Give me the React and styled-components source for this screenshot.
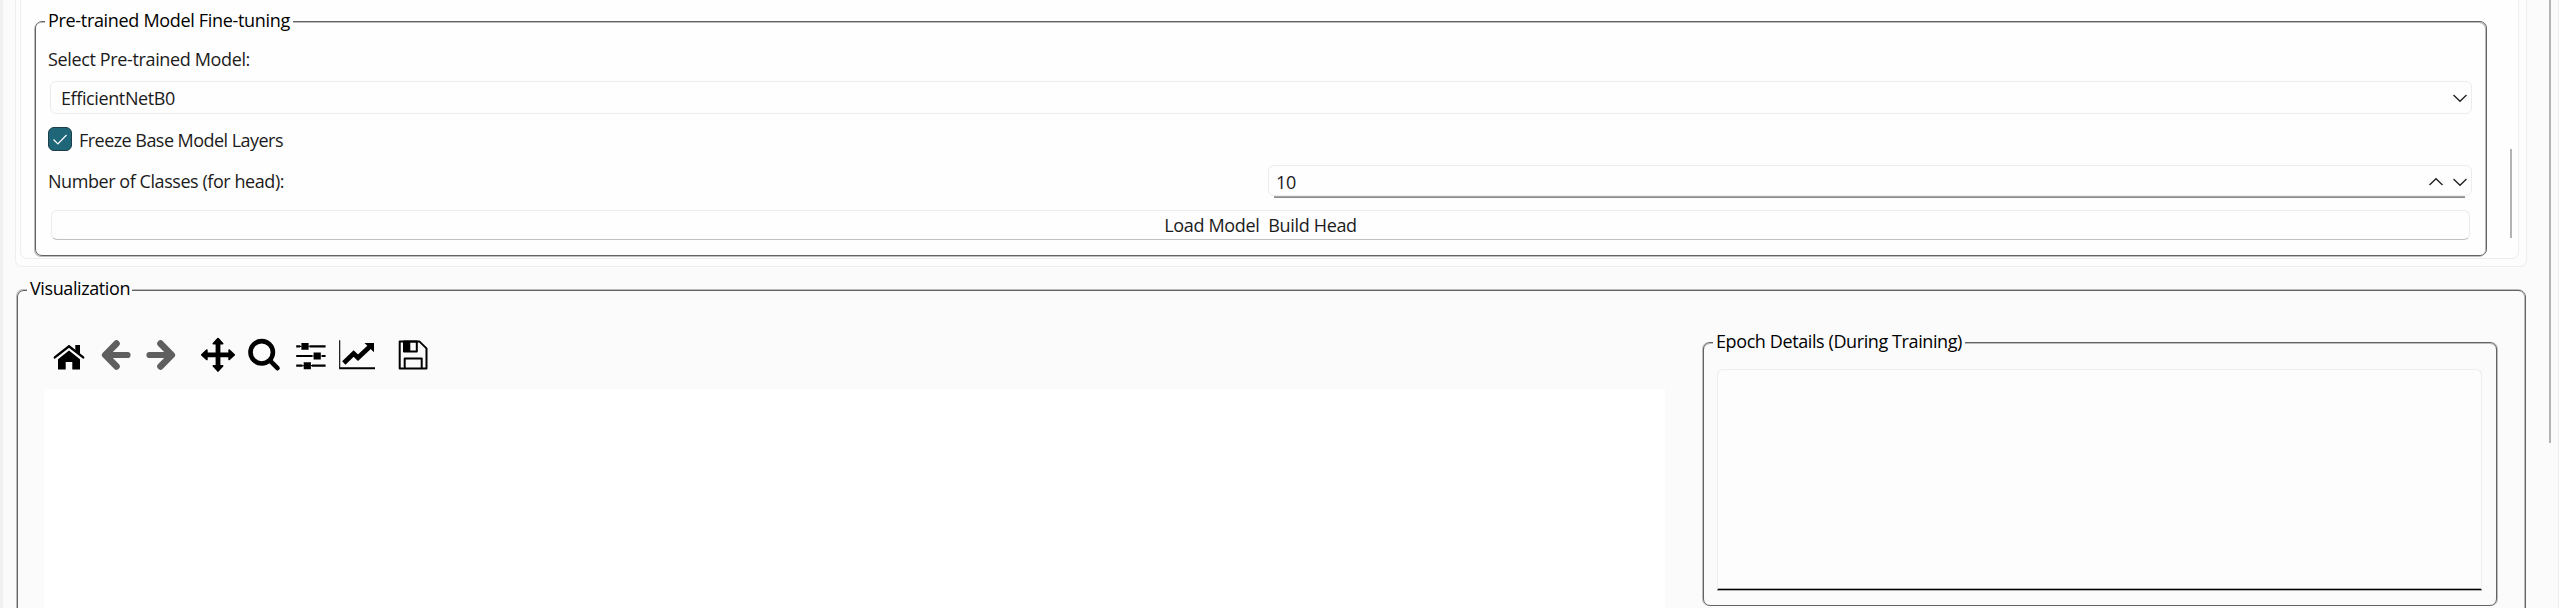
import React from 'react';
import styled, { createGlobalStyle } from 'styled-components';

const Global = createGlobalStyle`
  * { box-sizing: border-box; }
  html, body { margin: 0; height: 608px; overflow: hidden; background: #fbfbfb; }
  body { font-family: "Open Sans", "Noto Sans", sans-serif; font-size: 18px; line-height: 24px; color: #1b1b1b; }
`;

const Window = styled.div`
  display: flex;
  width: 2559px;
  height: 608px;
  overflow: hidden;
  background: #fbfbfb;
  border-left: 3px solid #f1f1f1;
  border-right: 1px solid #eeeeee;
`;

const Content = styled.main`
  display: flex;
  flex-direction: column;
  flex: none;
  width: 2524px;
  padding-left: 12px;
`;

const ScrollThumb = styled.div`
  flex: none;
  width: 2px;
  height: ${p => p.$h}px;
  margin: ${p => p.$top}px 0 0 ${p => p.$gap}px;
  background: #b3b3b3;
`;

const Card = styled.section`
  flex: none;
  height: 267px;
  padding: 0 7px 7px 4px;
  background: #fdfdfd;
  border: 1px solid #eeeeee;
  border-top: 0;
  border-radius: 0 0 7px 7px;
`;

const ScrollArea = styled.div`
  display: flex;
  height: 259px;
  padding: 21px 0 0 14px;
  background: #fefefe;
  border: 1px solid #eeeeee;
  border-top: 0;
  border-radius: 0 0 7px 7px;
`;

const Group = styled.section`
  display: flex;
  flex-direction: column;
  flex: none;
  width: ${p => p.$w}px;
  height: ${p => p.$h}px;
  border: 1px solid #636363;
  border-radius: 7px;
`;

const FormGroup = styled(Group)`
  box-shadow: -1px 1px 0 #bcbcbc, inset -1px 1px 0 #bcbcbc;
`;

const PlotGroup = styled(Group)`
  margin: 23px 0 0 2px;
  box-shadow: -1px -1px 0 #bcbcbc, inset -1px 0 0 #bcbcbc;
`;

const DetailsGroup = styled(Group)`
  margin-top: 51px;
  box-shadow: -1px 0 0 #bcbcbc, 1px 0 0 #bcbcbc, inset 0 1px 0 #bcbcbc;
`;

const Caption = styled.div`
  flex: none;
  width: ${p => p.$w}px;
  height: 24px;
  margin: ${p => p.$up}px 0 0 9px;
  padding-left: 3px;
  background: ${p => p.$bg};
  color: #000;
`;

const Text = styled.span`
  letter-spacing: ${p => p.$ls || 0}px;
  white-space: pre;
`;

const Form = styled.div`
  display: flex;
  flex-direction: column;
  padding: 15px 0 0 12px;
`;

const Row = styled.div`
  display: flex;
  align-items: ${p => p.$align || 'center'};
  height: ${p => p.$h}px;
  margin-top: ${p => p.$mt || 0}px;
`;

const Combo = styled.div`
  display: flex;
  justify-content: space-between;
  width: 2422px;
  height: 33px;
  margin: 10px 0 0 2px;
  padding: 4px 4px 0 10px;
  border: 1px solid #ececec;
  border-radius: 6px;
`;

const Check = styled.div`
  display: flex;
  align-items: center;
  justify-content: center;
  width: 24px;
  height: 24px;
  margin-right: 7px;
  background: #1e6678;
  border: 1px solid #1d3e48;
  border-radius: 6px;
`;

const CheckLabel = styled.div`
  padding-top: 2px;
`;

const SpinLabel = styled.div`
  width: 1220px;
  padding-top: 4px;
`;

const Spin = styled.div`
  display: flex;
  flex-direction: column;
  width: 1204px;
`;

const SpinBox = styled.div`
  display: flex;
  height: 31px;
  padding: 4px 4px 0 7px;
  border: 1px solid #ececec;
  border-radius: 6px;
`;

const Underline = styled.div`
  height: 2px;
  margin: 0 7px 0 6px;
  background: #8a8a8a;
  border-top: 1px solid #a8a8a8;
`;

const Steppers = styled.div`
  display: flex;
  gap: 10px;
  margin-left: auto;
`;

const Button = styled.button`
  width: 2419px;
  height: 30px;
  margin: 12px 0 0 3px;
  padding: 0;
  font: inherit;
  color: inherit;
  background: transparent;
  border: 1px solid #ebebeb;
  border-bottom-color: #c2c2c2;
  border-radius: 6px;
`;

const PlotBody = styled.div`
  display: flex;
  flex: 1;
  margin-top: -9px;
`;

const PlotColumn = styled.div`
  display: flex;
  flex-direction: column;
  width: 1621px;
  margin: 0 38px 0 26px;
`;

const Toolbar = styled.div`
  display: flex;
  height: 98px;
  padding: 46px 0 0 7px;
`;

const Tool = styled.svg`
  flex: none;
  width: 36px;
  height: 36px;
  margin-right: ${p => p.$gap}px;
  color: ${p => (p.$off ? '#5f5f5f' : '#000')};
`;

const Canvas = styled.div`
  flex: 1;
  background: #fff;
`;

const LogBox = styled.div`
  height: 221px;
  width: 765px;
  margin: 16px 0 0 13px;
  background: #fdfdfd;
  border: 1px solid #eeeeee;
  border-bottom: 1px solid #000;
  border-radius: 6px 6px 0 0;
  box-shadow: 0 1px 0 #b0b0b0, inset 0 -1px 0 #b0b0b0;
`;

const Chevron = ({ up }) => (
  <svg width="14" height="24" viewBox="0 0 14 24" fill="none" stroke="#1f1f1f" strokeWidth="1.3">
    <path d={up ? 'M.5 15 7 8.7 13.5 15' : 'M.5 9 7 15.3 13.5 9'} />
  </svg>
);

const HomeIcon = () => (
  <Tool viewBox="0 0 36 36" $gap={11}>
    <path d="M3.8 20.4 18 9.3l14.2 11.1" fill="none" stroke="currentColor" strokeWidth="2.4" strokeLinecap="round" />
    <path d="M24.3 8h4.7v9.2l-4.7-3.7zM7 22.3 18 13.6l11 8.7v10.2h-7.7V25h-6.6v7.5H7z" fill="currentColor" />
  </Tool>
);

const ArrowIcon = ({ forward, gap }) => (
  <Tool viewBox="0 0 36 36" $gap={gap} $off>
    <g transform={forward ? 'matrix(-1 0 0 1 36 0)' : undefined} fill="none" stroke="currentColor" strokeLinejoin="round" strokeLinecap="round">
      <path d="M18.5 6.6 7.2 18l11.3 11.4" strokeWidth="6.6" />
      <path d="M9 18h20.5" strokeWidth="6.2" />
    </g>
  </Tool>
);

const MoveIcon = () => (
  <Tool viewBox="0 0 36 36" $gap={10}>
    <path d="M18 5v26M5 17.8h26" stroke="currentColor" strokeWidth="4.8" />
    <path d="M18 1.6 22.6 6.6h-9.2zM18 34 13.4 29h9.2zM1.8 17.8l5-4.6v9.2zM34.2 17.8l-5 4.6v-9.2z" fill="currentColor" stroke="currentColor" strokeWidth="1.8" strokeLinejoin="round" />
  </Tool>
);

const ZoomIcon = () => (
  <Tool viewBox="0 0 36 36" $gap={11}>
    <g fill="none" stroke="currentColor" strokeWidth="4.6" strokeLinecap="round">
      <circle cx="15.7" cy="15.3" r="11.2" />
      <path d="m24.5 24.2 7 7" />
    </g>
  </Tool>
);

const SlidersIcon = () => (
  <Tool viewBox="0 0 36 36" $gap={10}>
    <path d="M3.2 9.3H7M16.6 9.3h16M3.2 19h16.2M29 19h3.6M3.2 28.7h6.2M19 28.7h13.6" stroke="currentColor" strokeWidth="2.2" />
    <path d="M8.4 5.9h7.2v6.9H8.4zM20.6 15.6h7.2v6.9h-7.2zM10.7 25.3h7.2v6.9h-7.2z" fill="currentColor" />
    <path d="M7 9.3h1.5M15.4 9.3h1.3M19.3 19h1.5M27.6 19H29M9.3 28.7h1.5M17.7 28.7H19" stroke="currentColor" strokeWidth="1.2" />
  </Tool>
);

const ChartIcon = () => (
  <Tool viewBox="0 0 36 36" $gap={20}>
    <path d="M.7 3.2v28.3" stroke="currentColor" strokeWidth="1.1" />
    <path d="M.2 31.3H36" stroke="currentColor" strokeWidth="1.9" />
    <path d="m4.8 26 9.8-9.4 4.4 4.2L31 9.5" fill="none" stroke="currentColor" strokeWidth="4.8" />
    <path d="M25.5 6H35v9.2z" fill="currentColor" />
  </Tool>
);

const SaveIcon = () => (
  <Tool viewBox="0 0 36 36" $gap={0}>
    <g fill="none" stroke="currentColor" strokeWidth="2" strokeLinejoin="round">
      <path d="M4.7 4.4h19.6l7.2 7v20H4.7z" />
      <path d="M9 4.6h12.8v9.8H9z" />
      <path d="M9.7 31V21.6h17V31" />
    </g>
    <path d="M9.3 5h6v9.2h-6z" fill="currentColor" />
  </Tool>
);

export default function App() {
  return (
    <Window>
      <Global />
      <Content>
        <Card>
          <ScrollArea>
            <FormGroup $w={2452} $h={235}>
              <Caption $w={248} $up={-14} $bg="#fefefe"><Text $ls={-0.32}>Pre-trained Model Fine-tuning</Text></Caption>
              <Form>
                <Row $h={24}><Text $ls={-0.36}>Select Pre-trained Model:</Text></Row>
                <Combo><Text $ls={-0.39}>EfficientNetB0</Text><Chevron /></Combo>
                <Row $h={24} $mt={13}>
                  <Check>
                    <svg width="16" height="14" viewBox="0 0 16 14" fill="none" stroke="#fff" strokeWidth="1.2"><path d="m1.5 7.5 4.4 4.4L14.5 3" /></svg>
                  </Check>
                  <CheckLabel><Text $ls={-0.54}>Freeze Base Model Layers</Text></CheckLabel>
                </Row>
                <Row $h={33} $mt={14} $align="flex-start">
                  <SpinLabel><Text $ls={-0.44}>Number of Classes (for head):</Text></SpinLabel>
                  <Spin>
                    <SpinBox><Text $ls={-0.4}>10</Text><Steppers><Chevron up /><Chevron /></Steppers></SpinBox>
                    <Underline />
                  </Spin>
                </Row>
                <Button><Text $ls={-0.33}>Load Model  Build Head</Text></Button>
              </Form>
            </FormGroup>
            <ScrollThumb $h={89} $top={128} $gap={23} />
          </ScrollArea>
        </Card>
        <PlotGroup $w={2509} $h={340}>
          <Caption $w={105} $up={-15} $bg="#fbfbfb"><Text $ls={-0.4}>Visualization</Text></Caption>
          <PlotBody>
            <PlotColumn>
              <Toolbar>
                <HomeIcon />
                <ArrowIcon gap={9} />
                <ArrowIcon forward gap={21} />
                <MoveIcon />
                <ZoomIcon />
                <SlidersIcon />
                <ChartIcon />
                <SaveIcon />
              </Toolbar>
              <Canvas />
            </PlotColumn>
            <DetailsGroup $w={794} $h={264}>
              <Caption $w={252} $up={-14} $bg="#fbfbfb"><Text $ls={-0.4}>Epoch Details (During Training)</Text></Caption>
              <LogBox />
            </DetailsGroup>
          </PlotBody>
        </PlotGroup>
      </Content>
      <ScrollThumb $h={443} $top={0} $gap={22} />
    </Window>
  );
}
